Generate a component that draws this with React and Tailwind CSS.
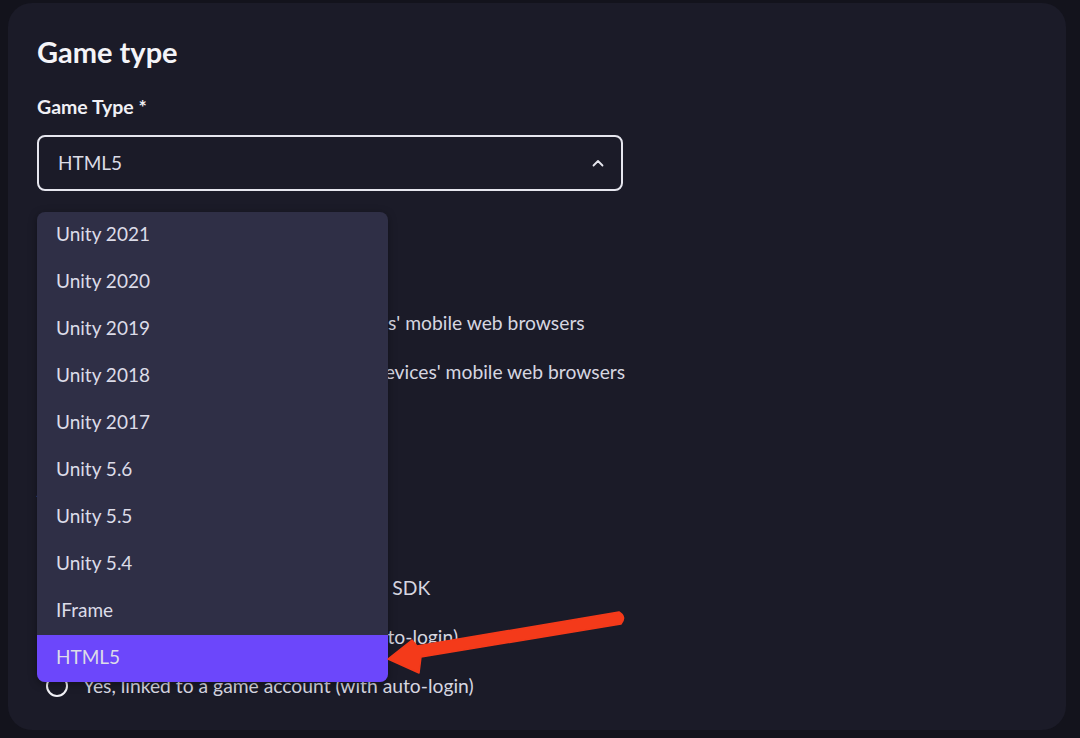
import React from "react";

const items = [
  "Unity 2021",
  "Unity 2020",
  "Unity 2019",
  "Unity 2018",
  "Unity 2017",
  "Unity 5.6",
  "Unity 5.5",
  "Unity 5.4",
  "IFrame",
  "HTML5",
];

function Radio({ children }) {
  return (
    <div className="flex items-center h-[28px] pl-[9px]">
      <span className="block w-[22px] h-[22px] rounded-full border-[2.5px] border-[#f2f2f7] shrink-0" />
      <span className="ml-[15px] text-[19.3px] leading-[24px] text-[#d6d6e0] whitespace-nowrap">{children}</span>
    </div>
  );
}

export default function App() {
  return (
    <div
      className="w-[1080px] h-[738px] bg-[#13131c] overflow-hidden relative"
      style={{ fontFamily: "Lato, 'Noto Sans', sans-serif" }}
    >
      <div className="absolute left-[8px] top-[3px] w-[1058px] h-[727px] rounded-[24px] bg-[#1b1b28] pl-[29px] pt-[31px]">
        <h2 className="text-[29px] leading-[36px] font-bold text-[#f4f4f8]">Game type</h2>
        <div className="mt-[25px] text-[19.5px] leading-[24px] font-bold text-[#f0f0f5]">Game Type *</div>
        <div className="relative mt-[16px] w-[586px]">
          <div className="h-[56px] rounded-[8px] border-2 border-[#e6e6ee] flex items-center justify-between pl-[19px] pr-[17px]">
            <span className="text-[19px] text-[#dcdce6]">HTML5</span>
            <svg width="12" height="8" viewBox="0 0 12 8">
              <polyline points="1.5,6.5 6,2 10.5,6.5" fill="none" stroke="#e6e6ee" strokeWidth="1.8" strokeLinecap="round" strokeLinejoin="round" />
            </svg>
          </div>

          <div className="absolute left-0 top-[77px] w-[351px] rounded-[8px] bg-[#2f2f46] overflow-hidden z-10 shadow-[0_2px_8px_rgba(0,0,0,0.35)]">
            {items.map((it, i) => (
              <div
                key={it}
                className={
                  "h-[47px] flex items-center pl-[19px] pb-[2px] text-[19px] text-[#dcdce8] " +
                  (i === items.length - 1 ? "bg-[#6c47fb]" : "")
                }
              >
                {it}
              </div>
            ))}
          </div>
        </div>

        <div className="mt-[70px] text-[19.5px] leading-[24px] font-bold text-[#f0f0f5]">Mobile Compatibility *</div>
        <div className="mt-[24px] flex flex-col gap-[21px]">
          <Radio>Yes, the game works on most devices' mobile web browsers</Radio>
          <Radio>No, the game won't work on most devices' mobile web browsers</Radio>
        </div>

        <div className="mt-[92px] text-[19.5px] leading-[24px] font-bold text-[#f0f0f5]">Account Linking *</div>
        <div className="mt-[23px] flex flex-col gap-[21px]">
          <Radio>No</Radio>
          <Radio>Yes, integrated with the game portal SDK</Radio>
          <Radio>Yes, linked to a game account (no auto-login)</Radio>
          <Radio>Yes, linked to a game account (with auto-login)</Radio>
        </div>
      </div>

      <svg className="absolute left-0 top-0 z-20 pointer-events-none" width="1080" height="738" viewBox="0 0 1080 738">
        <path
          d="M619 612 Q627 617 621 624 L421 657 L419 673 L388 659 L412 640 L417 646 Z"
          fill="#f43a1a"
          stroke="#f43a1a"
          strokeWidth="1.5"
          strokeLinejoin="round"
        />
      </svg>
    </div>
  );
}
